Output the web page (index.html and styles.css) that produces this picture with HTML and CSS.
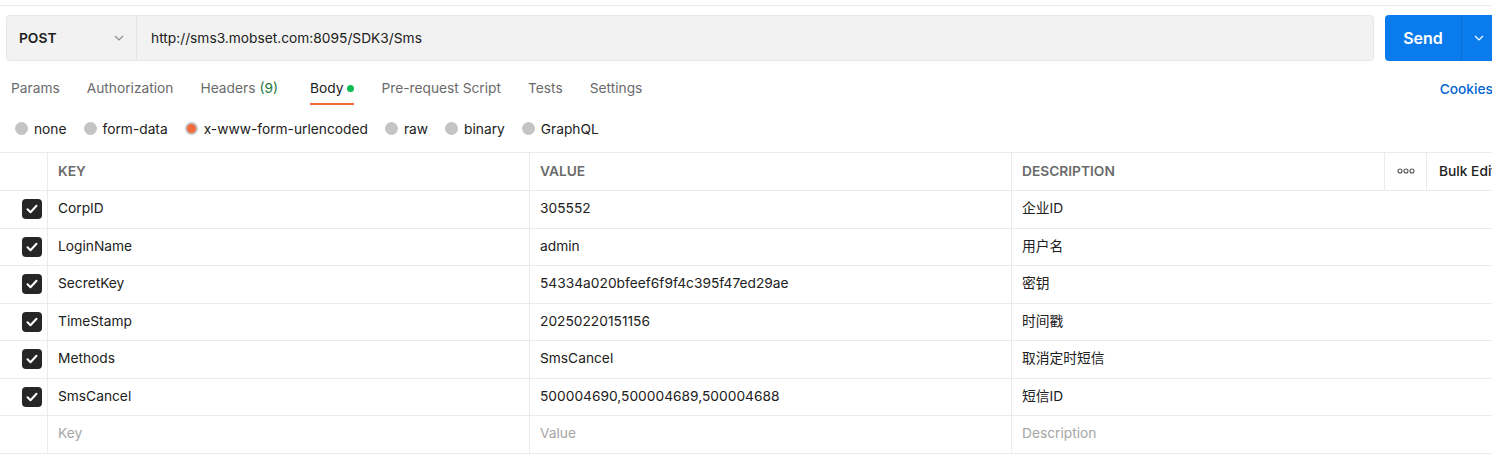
FILE: index.html
```html
<!DOCTYPE html>
<html lang="zh">
<head>
    <meta charset="UTF-8">
    <title>POST http://sms3.mobset.com:8095/SDK3/Sms</title>
    <link rel="stylesheet" href="styles.css">
</head>
<body>
    <div class="main">
        <div class="top-strip"></div>

        <div class="request-bar">
            <div class="url-box">
                <div class="method">
                    <span>POST</span>
                    <svg class="chevron" width="10" height="6" viewBox="0 0 10 6"><path d="M1 1l4 4 4-4" fill="none" stroke="#8a8a8a" stroke-width="1.1"/></svg>
                </div>
                <div class="url">http://sms3.mobset.com:8095/SDK3/Sms</div>
            </div>
            <div class="send-btn">
                <span class="send-label">Send</span>
                <span class="send-more">
                    <svg width="10" height="6" viewBox="0 0 10 6"><path d="M1 1l4 4 4-4" fill="none" stroke="#fff" stroke-width="1.2"/></svg>
                </span>
            </div>
        </div>

        <div class="tabs">
            <div class="tab">Params</div>
            <div class="tab">Authorization</div>
            <div class="tab headers">Headers <span class="count">(9)</span></div>
            <div class="tab active">Body <span class="dot"></span></div>
            <div class="tab">Pre-request Script</div>
            <div class="tab">Tests</div>
            <div class="tab">Settings</div>
            <div class="cookies">Cookies</div>
        </div>

        <div class="body-types">
            <label class="radio"><span class="circle"></span>none</label>
            <label class="radio"><span class="circle"></span>form-data</label>
            <label class="radio"><span class="circle checked"></span>x-www-form-urlencoded</label>
            <label class="radio"><span class="circle"></span>raw</label>
            <label class="radio"><span class="circle"></span>binary</label>
            <label class="radio"><span class="circle"></span>GraphQL</label>
        </div>

        <div class="kv-table">
            <div class="kv-row head">
                <div class="cell check"></div>
                <div class="cell key">KEY</div>
                <div class="cell value">VALUE</div>
                <div class="cell desc-head">DESCRIPTION</div>
                <div class="cell more">
                    <svg width="18" height="6" viewBox="0 0 18 6"><circle cx="3" cy="3" r="2" fill="none" stroke="#555" stroke-width="1.1"/><circle cx="9" cy="3" r="2" fill="none" stroke="#555" stroke-width="1.1"/><circle cx="15" cy="3" r="2" fill="none" stroke="#555" stroke-width="1.1"/></svg>
                </div>
                <div class="cell bulk">Bulk Edit</div>
            </div>
            <div id="rows"></div>
            <div class="kv-row placeholder">
                <div class="cell check"></div>
                <div class="cell key">Key</div>
                <div class="cell value">Value</div>
                <div class="cell desc">Description</div>
            </div>
        </div>
    </div>

    <script>
        const params = [
            ['CorpID', '305552', '企业ID'],
            ['LoginName', 'admin', '用户名'],
            ['SecretKey', '54334a020bfeef6f9f4c395f47ed29ae', '密钥'],
            ['TimeStamp', '20250220151156', '时间戳'],
            ['Methods', 'SmsCancel', '取消定时短信'],
            ['SmsCancel', '500004690,500004689,500004688', '短信ID']
        ];

        const rows = document.getElementById('rows');
        params.forEach(([key, value, desc]) => {
            const row = document.createElement('div');
            row.className = 'kv-row';
            row.innerHTML = `
                <div class="cell check"><span class="checkbox"><svg width="12" height="10" viewBox="0 0 12 10"><path d="M1.5 5.2l3 3 6-6.5" fill="none" stroke="#fff" stroke-width="2" stroke-linecap="round" stroke-linejoin="round"/></svg></span></div>
                <div class="cell key">${key}</div>
                <div class="cell value">${value}</div>
                <div class="cell desc">${desc}</div>`;
            rows.appendChild(row);
        });
    </script>
</body>
</html>
```

FILE: styles.css
```css
:root {
    --text: #212121;
    --muted: #6b6b6b;
    --border: #ebebeb;
    --blue: #097bed;
    --orange: #f26b3a;
}

body {
    margin: 0;
    background: #fff;
    color: var(--text);
    font-family: Inter, 'Noto Sans CJK SC', sans-serif;
    font-size: 13.75px;
    line-height: 18px;
    overflow: hidden;
}

.main {
    width: 1503px;
}

.top-strip {
    height: 5px;
    border-bottom: 1px solid var(--border);
}

/* request bar */
.request-bar {
    display: flex;
    gap: 11px;
    padding: 9px 6px 0;
    height: 46px;
}

.url-box {
    flex: 1;
    display: flex;
    background: #f2f2f2;
    border: 1px solid #e6e6e6;
    border-radius: 4px;
}

.method {
    width: 130px;
    box-sizing: border-box;
    padding: 0 12px;
    display: flex;
    align-items: center;
    justify-content: space-between;
    border-right: 1px solid #e3e3e3;
    font-weight: 600;
}

.url {
    display: flex;
    align-items: center;
    padding-left: 14px;
}

.send-btn {
    width: 112px;
    display: flex;
    background: var(--blue);
    border-radius: 4px;
    color: #fff;
}

.send-label {
    width: 76px;
    display: flex;
    align-items: center;
    justify-content: center;
    font-size: 16px;
    font-weight: 600;
    border-right: 1px solid #0a6ccf;
}

.send-more {
    flex: 1;
    display: flex;
    align-items: center;
    padding-left: 12px;
}

/* tabs */
.tabs {
    display: flex;
    align-items: flex-start;
    margin-top: 8px;
    padding-left: 11px;
    height: 36px;
}

.tab {
    height: 36px;
    box-sizing: border-box;
    padding-top: 4px;
    margin-right: 27px;
    display: flex;
    align-items: center;
    gap: 4px;
    color: var(--muted);
    border-bottom: 2px solid transparent;
}

.tab.headers {
    margin-right: 32px;
}

.tab .count {
    color: #1b7a3c;
}

.tab.active {
    color: var(--text);
    border-bottom-color: var(--orange);
}

.dot {
    width: 7px;
    height: 7px;
    border-radius: 50%;
    background: #0cbb52;
}

.cookies {
    margin-left: auto;
    margin-right: 10px;
    height: 36px;
    padding-top: 4px;
    box-sizing: border-box;
    display: flex;
    align-items: center;
    color: #0265d2;
    font-weight: 500;
}

/* body type radios */
.body-types {
    height: 47px;
    display: flex;
    align-items: center;
    padding-left: 15px;
    gap: 17px;
}

.radio {
    display: flex;
    align-items: center;
    gap: 6px;
}

.circle {
    width: 13px;
    height: 13px;
    border-radius: 50%;
    background: #c4c4c4;
    box-sizing: border-box;
}

.circle.checked {
    background: var(--orange);
    border: 2px solid #c4c4c4;
}

/* key value table */
.kv-table {
    border-top: 1px solid var(--border);
}

.kv-row {
    display: flex;
    height: 37.5px;
    box-sizing: border-box;
    border-bottom: 1px solid var(--border);
}

.kv-row.head {
    height: 38px;
    color: var(--muted);
    font-weight: 600;
}

.cell {
    display: flex;
    align-items: center;
    box-sizing: border-box;
    padding-left: 10px;
    padding-bottom: 2px;
    border-right: 1px solid var(--border);
}

.cell.check {
    width: 48px;
    padding: 0 0 0 22px;
}

.cell.key,
.cell.value {
    width: 482px;
}

.cell.desc {
    flex: 1;
    border-right: none;
}

.cell.desc-head {
    width: 373px;
}

.cell.more {
    width: 42px;
    padding-left: 12px;
}

.cell.bulk {
    flex: 1;
    padding-left: 12px;
    color: var(--text);
    font-weight: 500;
    border-right: none;
}

.checkbox {
    width: 20px;
    height: 20px;
    border-radius: 4px;
    background: #262626;
    display: flex;
    align-items: center;
    justify-content: center;
}

.placeholder .cell {
    color: #a6a6a6;
}
```
